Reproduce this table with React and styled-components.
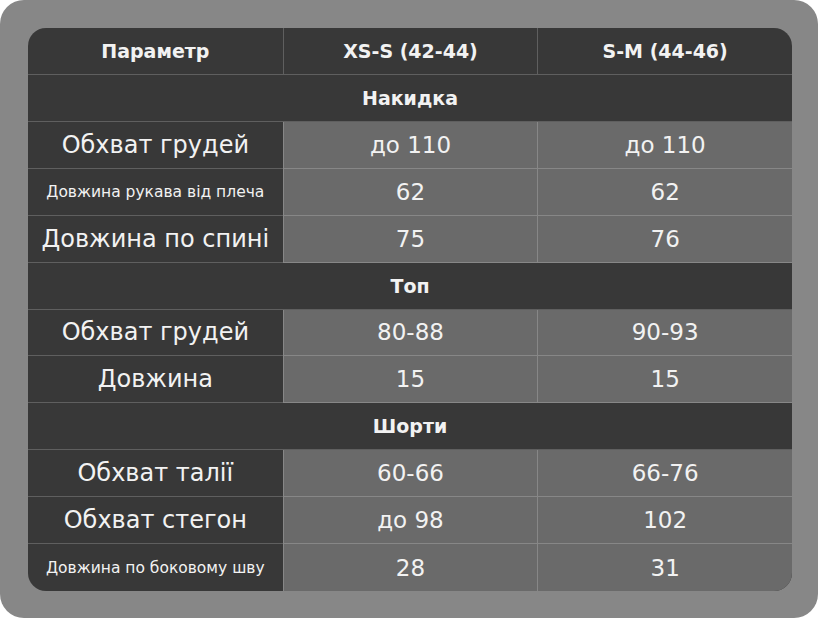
import React from 'react'
import styled, { createGlobalStyle } from 'styled-components'

const sections = [
  {
    title: 'Накидка',
    rows: [
      { name: 'Обхват грудей', a: 'до 110', b: 'до 110' },
      { name: 'Довжина рукава від плеча', a: '62', b: '62', small: true },
      { name: 'Довжина по спині', a: '75', b: '76' },
    ],
  },
  {
    title: 'Топ',
    rows: [
      { name: 'Обхват грудей', a: '80-88', b: '90-93' },
      { name: 'Довжина', a: '15', b: '15' },
    ],
  },
  {
    title: 'Шорти',
    rows: [
      { name: 'Обхват талії', a: '60-66', b: '66-76' },
      { name: 'Обхват стегон', a: 'до 98', b: '102' },
      { name: 'Довжина по боковому шву', a: '28', b: '31', small: true },
    ],
  },
]

const App = () => {
  return (
    <>
      <GlobalStyle />
      <Frame>
        <Table>
          <HeadCell>Параметр</HeadCell>
          <HeadCell divided>XS-S (42-44)</HeadCell>
          <HeadCell divided>S-M (44-46)</HeadCell>
          {sections.map((s, si) => (
            <React.Fragment key={s.title}>
              <SectionCell>{s.title}</SectionCell>
              {s.rows.map((r, ri) => {
                const last = si === sections.length - 1 && ri === s.rows.length - 1
                return (
                  <React.Fragment key={r.name}>
                    <NameCell $small={r.small} $last={last}>{r.name}</NameCell>
                    <ValueCell $last={last}>{r.a}</ValueCell>
                    <ValueCell $last={last}>{r.b}</ValueCell>
                  </React.Fragment>
                )
              })}
            </React.Fragment>
          ))}
        </Table>
      </Frame>
    </>
  )
}

export default App

const GlobalStyle = createGlobalStyle`
  body {
    margin: 0;
    background: #ffffff;
    font-family: "DejaVu Sans", "Noto Sans", sans-serif;
  }
`

const Frame = styled.div`
  width: 818px;
  height: 618px;
  background: #878787;
  border-radius: 24px;
  padding: 28px 26px 27px 28px;
  box-sizing: border-box;
`

const Table = styled.div`
  display: grid;
  grid-template-columns: repeat(3, 1fr);
  grid-template-rows: repeat(12, 1fr);
  width: 764px;
  height: 563px;
  border-radius: 18px;
  overflow: hidden;
  background: #383838;
  color: #f2f2f2;
`

const Cell = styled.div`
  display: flex;
  align-items: center;
  justify-content: center;
  text-align: center;
  white-space: nowrap;
  border-bottom: ${p => (p.$last ? 'none' : '1px solid rgba(255,255,255,0.2)')};
`

const HeadCell = styled(Cell)`
  font-size: 19px;
  font-weight: 600;
  border-left: ${p => (p.divided ? '1px solid rgba(255,255,255,0.2)' : 'none')};
`

const SectionCell = styled(Cell)`
  grid-column: 1 / -1;
  font-size: 19px;
  font-weight: 600;
`

const NameCell = styled(Cell)`
  font-size: ${p => (p.$small ? '15.5px' : '24px')};
`

const ValueCell = styled(Cell)`
  background: #6a6a6a;
  font-size: 23px;
  border-left: 1px solid rgba(255,255,255,0.2);
`
